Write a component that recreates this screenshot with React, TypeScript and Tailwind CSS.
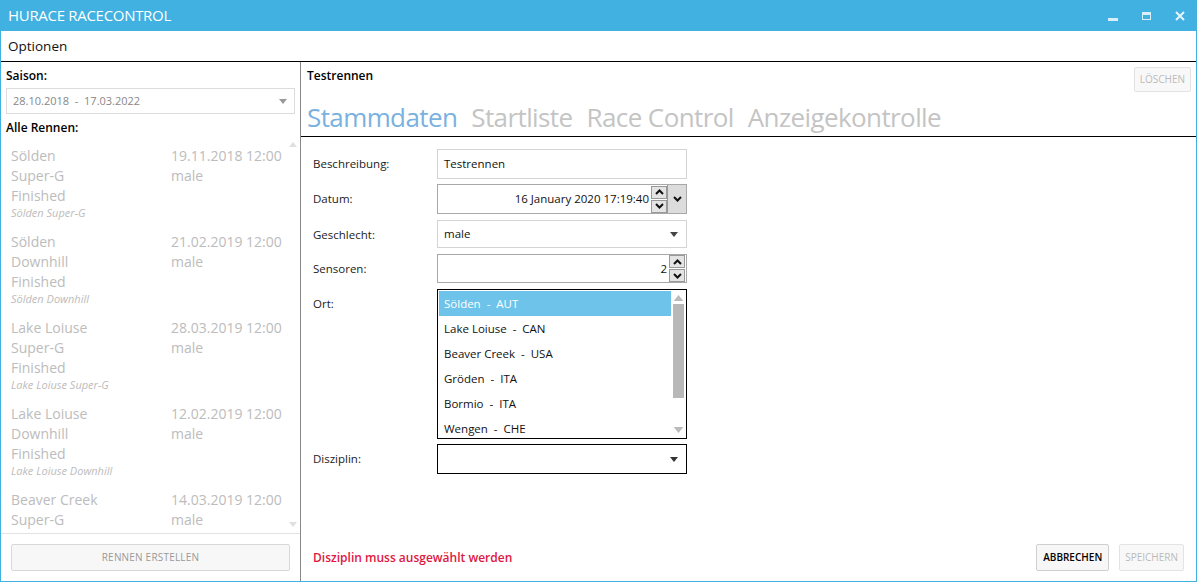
import React from "react";

const races = [
  { place: "Sölden", disc: "Super-G", date: "19.11.2018 12:00", status: "Finished", desc: "Sölden Super-G" },
  { place: "Sölden", disc: "Downhill", date: "21.02.2019 12:00", status: "Finished", desc: "Sölden Downhill" },
  { place: "Lake Loiuse", disc: "Super-G", date: "28.03.2019 12:00", status: "Finished", desc: "Lake Loiuse Super-G" },
  { place: "Lake Loiuse", disc: "Downhill", date: "12.02.2019 12:00", status: "Finished", desc: "Lake Loiuse Downhill" },
  { place: "Beaver Creek", disc: "Super-G", date: "14.03.2019 12:00", status: "Finished", desc: "Beaver Creek Super-G" },
];

const locations = ["Sölden  -  AUT", "Lake Loiuse  -  CAN", "Beaver Creek  -  USA", "Gröden  -  ITA", "Bormio  -  ITA", "Wengen  -  CHE"];

function Caret({ className = "" }: { className?: string }) {
  return (
    <svg width="8" height="5" viewBox="0 0 8 5" className={className}>
      <path d="M0 0h8L4 5z" fill="currentColor" />
    </svg>
  );
}

function Chevron({ up }: { up?: boolean }) {
  return (
    <svg width="9" height="6" viewBox="0 0 9 6">
      <path d={up ? "M1 5l3.5-3.5L8 5" : "M1 1l3.5 3.5L8 1"} stroke="#111" strokeWidth="2" fill="none" />
    </svg>
  );
}

function SpinButtons() {
  return (
    <div className="flex flex-col gap-[1px] h-full justify-center">
      <div className="w-[16px] h-[13px] border border-[#999] bg-[#e4e4e4] flex items-center justify-center">
        <Chevron up />
      </div>
      <div className="w-[16px] h-[13px] border border-[#999] bg-[#e4e4e4] flex items-center justify-center">
        <Chevron />
      </div>
    </div>
  );
}

function FormRow({ label, children, h }: { label: string; children: React.ReactNode; h: string }) {
  return (
    <div className={`flex ${h}`}>
      <div className="w-[124px] text-[11.5px] text-[#222] pt-[6px]">{label}</div>
      <div className="w-[250px]">{children}</div>
    </div>
  );
}

export default function App() {
  return (
    <div
      className="w-[1197px] h-[582px] flex flex-col border border-t-0 border-[#41b1e1] bg-white overflow-hidden"
      style={{ fontFamily: "'Open Sans', 'Noto Sans', sans-serif" }}
    >
      {/* title bar */}
      <div className="h-[31px] bg-[#41b1e1] flex items-center justify-between pl-[8px] pr-[12px] -mx-[1px]">
        <span className="text-white text-[15px] tracking-[-0.3px]">HURACE RACECONTROL</span>
        <div className="flex items-center gap-[24px] text-white">
          <div className="w-[10px] h-[3px] bg-[#d8eef9] mt-[8px]" />
          <div className="w-[9px] h-[8px] border border-t-[3px] border-[#d8eef9]" />
          <svg width="10" height="10" viewBox="0 0 10 10">
            <path d="M1 1l8 8M9 1l-8 8" stroke="#e6f4fb" strokeWidth="2" />
          </svg>
        </div>
      </div>

      {/* menu */}
      <div className="h-[31px] flex items-center pl-[7px] border-b border-black text-[13.5px] text-[#111]">Optionen</div>

      <div className="flex flex-1 min-h-0">
        {/* left panel */}
        <div className="w-[300px] border-r border-[#888] flex flex-col">
          <div className="px-[5px] pt-[5px]">
            <div className="text-[12px] font-semibold text-black leading-[17px]">Saison:</div>
            <div className="mt-[4px] h-[26px] border border-[#dcdcdc] flex items-center justify-between pl-[6px] pr-[7px] text-[11px] text-[#888] whitespace-pre">
              <span>28.10.2018  -  17.03.2022</span>
              <Caret className="text-[#999]" />
            </div>
            <div className="mt-[5px] text-[12px] font-semibold text-black leading-[17px]">Alle Rennen:</div>
          </div>
          <div className="flex-1 min-h-0 flex overflow-hidden border-b border-[#e3e3e3]">
            <div className="flex-1 overflow-hidden pl-[10px] pt-[10px]">
              {races.map((r, i) => (
                <div key={i} className="h-[86px] text-[#bcbcbc]">
                  <div className="grid grid-cols-[160px_1fr] text-[14px] leading-[20px] whitespace-nowrap">
                    <span>{r.place}</span>
                    <span>{r.date}</span>
                    <span>{r.disc}</span>
                    <span>male</span>
                    <span>{r.status}</span>
                    <span />
                  </div>
                  <div className="text-[11px] italic leading-[16px] -mt-[1px] whitespace-nowrap">{r.desc}</div>
                </div>
              ))}
            </div>
            <div className="w-[14px] flex flex-col justify-between items-center py-[6px] text-[#e0e0e0]">
              <Caret className="rotate-180" />
              <Caret />
            </div>
          </div>
          <div className="px-[10px] pt-[10px] pb-[10px]">
            <div className="h-[27px] border border-[#d8d8d8] rounded-[2px] bg-[#f7f7f7] flex items-center justify-center text-[10px] text-[#999] tracking-[0.2px]">
              RENNEN ERSTELLEN
            </div>
          </div>
        </div>

        {/* right panel */}
        <div className="flex-1 flex flex-col">
          <div className="flex justify-between pl-[6px] pr-[5px] pt-[5px] h-[30px]">
            <span className="text-[12px] font-semibold text-black">Testrennen</span>
            <div className="h-[25px] px-[5px] border border-[#e3e3e3] rounded-[2px] bg-[#f8f8f8] flex items-center text-[10px] text-[#bbb]">
              LÖSCHEN
            </div>
          </div>
          <div className="flex gap-[14px] pl-[6px] pt-[5px] text-[26px] leading-[40px] tracking-[-0.6px] text-[#c4c4c4] border-b border-black h-[45px] whitespace-nowrap">
            <span className="text-[#7ab1df]">Stammdaten</span>
            <span>Startliste</span>
            <span>Race Control</span>
            <span>Anzeigekontrolle</span>
          </div>

          <div className="flex flex-col pl-[12px] pt-[12px]">
            <FormRow label="Beschreibung:" h="h-[30px]">
              <div className="h-full border border-[#d4d4d4] flex items-center px-[6px] text-[11.5px] text-[#111]">Testrennen</div>
            </FormRow>
            <div className="h-[5px]" />
            <FormRow label="Datum:" h="h-[30px]">
              <div className="h-full border border-[#a8a8a8] flex items-center text-[11.5px] text-[#111]">
                <span className="flex-1 text-right pr-[2px] whitespace-nowrap">16 January 2020 17:19:40</span>
                <SpinButtons />
                <div className="w-[19px] h-full bg-[#dcdcdc] border-l border-[#999] flex items-center justify-center">
                  <Chevron />
                </div>
              </div>
            </FormRow>
            <div className="h-[6px]" />
            <FormRow label="Geschlecht:" h="h-[28px]">
              <div className="h-full border border-[#d4d4d4] flex items-center justify-between pl-[6px] pr-[8px] text-[11.5px] text-[#111]">
                <span>male</span>
                <Caret className="text-[#444]" />
              </div>
            </FormRow>
            <div className="h-[6px]" />
            <FormRow label="Sensoren:" h="h-[29px]">
              <div className="h-full border border-[#a8a8a8] flex items-center text-[11.5px] text-[#111] pr-[1px]">
                <span className="flex-1 text-right pr-[2px]">2</span>
                <SpinButtons />
              </div>
            </FormRow>
            <div className="h-[6px]" />
            <FormRow label="Ort:" h="h-[150px]">
              <div className="h-full border border-black flex p-[1px]">
                <div className="flex-1 overflow-hidden">
                  {locations.map((l, i) => (
                    <div
                      key={i}
                      className={`h-[25px] flex items-center px-[5px] text-[11.5px] whitespace-pre ${i === 0 ? "bg-[#6ec3ea] text-white" : "text-[#111]"}`}
                    >
                      {l}
                    </div>
                  ))}
                </div>
                <div className="w-[14px] flex flex-col items-center pt-[4px] pb-[4px] text-[#bbb]">
                  <Caret className="rotate-180 w-[11px] h-[6px]" />
                  <div className="w-[11px] h-[94px] bg-[#b8b8b8] mt-[3px]" />
                  <div className="flex-1" />
                  <Caret className="w-[11px] h-[6px]" />
                </div>
              </div>
            </FormRow>
            <div className="h-[5px]" />
            <FormRow label="Disziplin:" h="h-[30px]">
              <div className="h-full border border-black flex items-center justify-end pr-[8px] text-[#333]">
                <Caret />
              </div>
            </FormRow>
          </div>

          <div className="flex-1" />
          <div className="flex items-center justify-between pl-[12px] pr-[12px] pb-[10px]">
            <span className="text-[12px] font-semibold text-[#e0173f]">Disziplin muss ausgewählt werden</span>
            <div className="flex gap-[10px]">
              <div className="h-[27px] px-[6px] border border-[#cfcfcf] rounded-[2px] bg-[#f7f7f7] flex items-center text-[10px] font-semibold text-black">
                ABBRECHEN
              </div>
              <div className="h-[27px] px-[5px] border border-[#e3e3e3] rounded-[2px] bg-[#f8f8f8] flex items-center text-[10px] text-[#bbb]">
                SPEICHERN
              </div>
            </div>
          </div>
        </div>
      </div>
    </div>
  );
}
